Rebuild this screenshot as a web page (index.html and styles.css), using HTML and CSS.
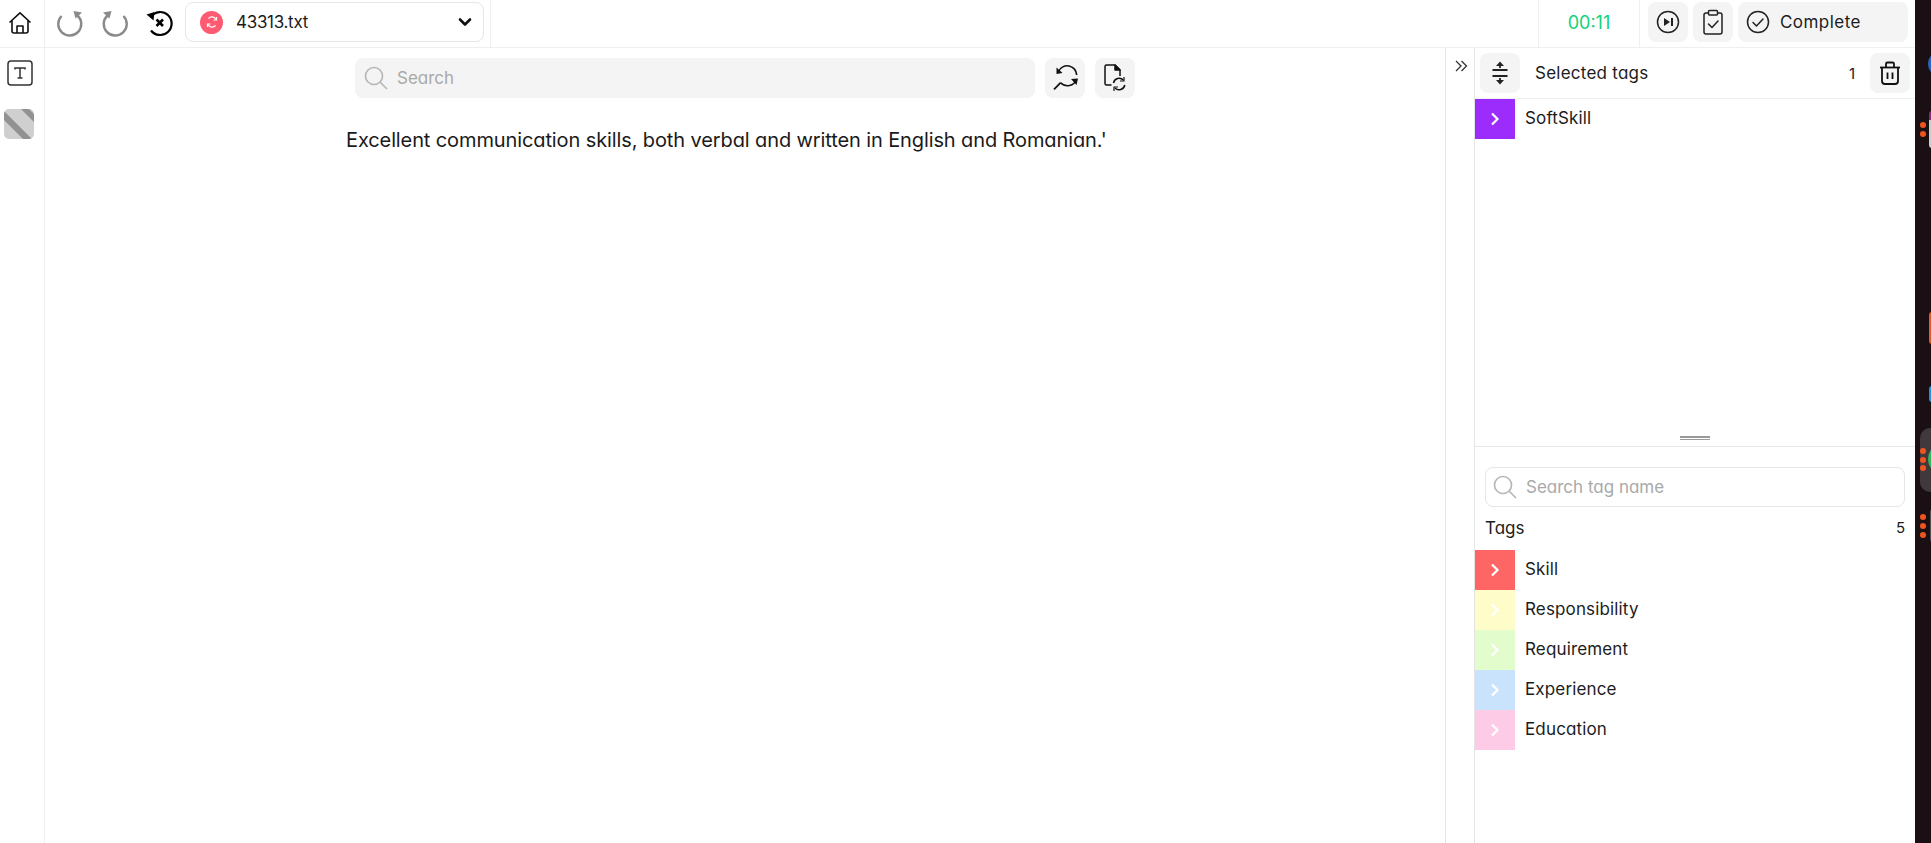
FILE: index.html
```html
<!DOCTYPE html>
<html lang="en">
<head>
    <meta charset="UTF-8" />
    <title>43313.txt</title>
    <link rel="stylesheet" href="styles.css">
</head>
<body>
    <div class="app">
        <header class="topbar">
            <div class="home-cell">
                <svg width="24" height="24" viewBox="0 0 24 24" fill="none" stroke="#111" stroke-width="1.600" stroke-linejoin="round"><path d="M1.500 11.500 12 1.800l10.500 9.700"/><path d="M4 9.500v10.500a2 2 0 0 0 2 2h12a2 2 0 0 0 2-2V9.500"/><path d="M9 22v-7h6v7"/></svg>
            </div>
            <div class="history">
                <svg width="28" height="28" viewBox="0 0 28 28" fill="none" stroke="#8a8a8a" stroke-width="2.400"><path d="M21.500 6.500A11.500 11.500 0 1 1 5.500 7"/><path d="M17.500 2 26 3.500 19.500 9.500z" fill="#8a8a8a" stroke="none"/></svg>
                <svg width="28" height="28" viewBox="0 0 28 28" fill="none" stroke="#8a8a8a" stroke-width="2.400"><path d="M6.500 6.500A11.500 11.500 0 1 0 22.500 7"/><path d="M10.500 2 2 3.500 8.500 9.500z" fill="#8a8a8a" stroke="none"/></svg>
                <svg width="28" height="28" viewBox="0 0 28 28" fill="none" stroke="#000" stroke-width="2.200"><path d="M5 7.500A11.500 11.500 0 1 1 5 21.500"/><path d="M0.500 5.500 8.500 3 7.500 11.500z" fill="#000" stroke="none"/><path d="M10.500 10.500l6.500 6.500M17 10.500l-6.500 6.500" stroke-width="2.600"/></svg>
            </div>
            <div class="file-cell">
                <div class="file-select">
                    <span class="file-badge">
                        <svg width="14" height="14" viewBox="0 0 14 14" fill="none" stroke="#fff" stroke-width="1.200"><path d="M11 4.500A4.500 4.500 0 0 0 3.500 3.500"/><path d="M3 9.500a4.500 4.500 0 0 0 7.500 1"/><path d="M11.500 2v3H8.500M2.500 12V9h3"/></svg>
                    </span>
                    <span class="file-name">43313.txt</span>
                    <svg class="caret" width="14" height="10" viewBox="0 0 14 10" fill="none" stroke="#111" stroke-width="2.600" stroke-linecap="round" stroke-linejoin="round"><path d="M2 2.500l5 5 5-5"/></svg>
                </div>
            </div>
            <div class="top-spacer"></div>
            <div class="timer">00:11</div>
            <div class="top-actions">
                <button class="icon-btn">
                    <svg width="24" height="24" viewBox="0 0 24 24" fill="none" stroke="#222" stroke-width="1.500"><circle cx="12" cy="12" r="10.500"/><path d="M8 8l6 4-6 4z" fill="#222" stroke="none"/><path d="M16 8v8" stroke-width="2"/></svg>
                </button>
                <button class="icon-btn">
                    <svg width="20" height="26" viewBox="0 0 20 26" fill="none" stroke="#222" stroke-width="1.500" stroke-linejoin="round"><path d="M5.500 4H3a2 2 0 0 0-2 2v17a2 2 0 0 0 2 2h14a2 2 0 0 0 2-2V6a2 2 0 0 0-2-2h-2.500"/><rect x="5.500" y="1.500" width="9" height="4.500" rx="1"/><path d="M5.500 15l3.500 3.500 6-6.500" stroke-linecap="round"/></svg>
                </button>
                <button class="complete-btn">
                    <svg width="24" height="24" viewBox="0 0 24 24" fill="none" stroke="#222" stroke-width="1.500"><circle cx="12" cy="12" r="10.500"/><path d="M7 12.500l3.500 3.500 6.500-7" stroke-linecap="round" stroke-linejoin="round"/></svg>
                    <span>Complete</span>
                </button>
            </div>
        </header>

        <div class="workspace">
            <aside class="rail">
                <svg width="26" height="26" viewBox="0 0 26 26" fill="none" stroke="#333" stroke-width="1.500"><rect x="1" y="1" width="24" height="24" rx="3"/><path d="M8 9.500V8h10v1.500M13 8v10M10.500 18h5"/></svg>
                <svg class="swatch" width="30" height="30" viewBox="0 0 30 30"><rect width="30" height="30" fill="#cfcfcf"/><path d="M0 2 28 30H19L0 11zM17 0h8L30 5V13z" fill="#929292"/></svg>
            </aside>

            <main class="center">
                <div class="doc-tools">
                    <div class="doc-search">
                        <svg width="24" height="24" viewBox="0 0 24 24" fill="none" stroke="#b8b8b8" stroke-width="1.700"><circle cx="10" cy="10" r="8.500"/><path d="M16 16l7 7"/></svg>
                        <span>Search</span>
                    </div>
                    <button class="icon-btn">
                        <svg width="28" height="28" viewBox="0 0 28 28" fill="none" stroke="#111" stroke-width="1.600"><path d="M7.500 7.500A9.500 9.500 0 0 1 25.700 11"/><path d="M25.500 15.500A9.500 9.500 0 0 1 9.700 18.700"/><path d="M5.500 3.500V10L11.500 9zM20 15l7-.500L25.500 21z" fill="#111" stroke="none"/><path d="M3 25.300 9.700 18.700" stroke-width="1.800"/></svg>
                    </button>
                    <button class="icon-btn">
                        <svg width="22" height="28" viewBox="0 0 22 28" fill="none" stroke="#111" stroke-width="1.500" stroke-linejoin="round"><path d="M7.500 21H2.500A1.500 1.500 0 0 1 1 19.500v-17A1.500 1.500 0 0 1 2.500 1H11l5 5v6"/><path d="M11 1v5h5z" fill="#111"/><path d="M9.500 19a5.800 5.800 0 0 1 9.800-3"/><path d="M20.800 21a5.800 5.800 0 0 1-9.800 3"/><path d="M20 13v4h-4M10 27v-4h4" stroke-width="1.200"/></svg>
                    </button>
                </div>
                <p class="doc-text">Excellent communication skills, both verbal and written in English and Romanian.'</p>
            </main>

            <div class="collapse-strip">
                <svg width="14" height="12" viewBox="0 0 14 12" fill="none" stroke="#333" stroke-width="1.300"><path d="M2 1l5 5-5 5M7.500 1l5 5-5 5"/></svg>
            </div>

            <section class="tags-panel">
                <div class="selected-head">
                    <button class="icon-btn">
                        <svg width="20" height="24" viewBox="0 0 20 24" fill="none" stroke="#222" stroke-width="1.800"><path d="M2.500 9h15M2.500 15h15M10 7V3M10 17v4"/><path d="M6 5 10 .500 14 5zM6 19 10 23.500 14 19z" fill="#222" stroke="none"/></svg>
                    </button>
                    <span class="selected-title">Selected tags</span>
                    <span class="selected-count">1</span>
                    <button class="icon-btn">
                        <svg width="22" height="24" viewBox="0 0 22 24" fill="none" stroke="#111" stroke-width="1.800" stroke-linejoin="round"><path d="M1 6.500h20"/><path d="M7 6V3a1.500 1.500 0 0 1 1.500-1.500h5A1.500 1.500 0 0 1 15 3v3"/><path d="M3 7v13a3 3 0 0 0 3 3h10a3 3 0 0 0 3-3V7"/><path d="M8.500 11.500v6.500M13.500 11.500v6.500"/></svg>
                    </button>
                </div>
                <div class="selected-list">
                    <div class="tag-row">
                        <span class="tag-chip chip-purple"><svg width="10" height="14" viewBox="0 0 10 14" fill="none" stroke="#fff" stroke-width="2.200"><path d="M2 1.500 7.500 7 2 12.500"/></svg></span>
                        <span>SoftSkill</span>
                    </div>
                </div>
                <div class="panel-handle"><span></span></div>
                <div class="tags-lower">
                    <div class="tag-search">
                        <svg width="24" height="24" viewBox="0 0 24 24" fill="none" stroke="#b8b8b8" stroke-width="1.700"><circle cx="10" cy="10" r="8.500"/><path d="M16 16l7 7"/></svg>
                        <span>Search tag name</span>
                    </div>
                    <div class="tags-head">
                        <span>Tags</span>
                        <span class="tags-count">5</span>
                    </div>
                </div>
                <div class="tag-list">
                    <div class="tag-row">
                        <span class="tag-chip chip-red"><svg width="10" height="14" viewBox="0 0 10 14" fill="none" stroke="#fff" stroke-width="2.200"><path d="M2 1.500 7.500 7 2 12.500"/></svg></span>
                        <span>Skill</span>
                    </div>
                    <div class="tag-row">
                        <span class="tag-chip chip-yellow"><svg width="10" height="14" viewBox="0 0 10 14" fill="none" stroke="#fff" stroke-width="2.200"><path d="M2 1.500 7.500 7 2 12.500"/></svg></span>
                        <span>Responsibility</span>
                    </div>
                    <div class="tag-row">
                        <span class="tag-chip chip-green"><svg width="10" height="14" viewBox="0 0 10 14" fill="none" stroke="#fff" stroke-width="2.200"><path d="M2 1.500 7.500 7 2 12.500"/></svg></span>
                        <span>Requirement</span>
                    </div>
                    <div class="tag-row">
                        <span class="tag-chip chip-blue"><svg width="10" height="14" viewBox="0 0 10 14" fill="none" stroke="#fff" stroke-width="2.200"><path d="M2 1.500 7.500 7 2 12.500"/></svg></span>
                        <span>Experience</span>
                    </div>
                    <div class="tag-row">
                        <span class="tag-chip chip-pink"><svg width="10" height="14" viewBox="0 0 10 14" fill="none" stroke="#fff" stroke-width="2.200"><path d="M2 1.500 7.500 7 2 12.500"/></svg></span>
                        <span>Education</span>
                    </div>
                </div>
            </section>
        </div>
    </div>

    <!-- sliver of the desktop behind the window -->
    <div class="desktop-strip">
        <span class="peek peek-blue"></span>
        <span class="peek peek-grey"></span>
        <span class="dot dot-a1"></span>
        <span class="dot dot-a2"></span>
        <span class="peek peek-orange"></span>
        <span class="peek peek-blue2"></span>
        <span class="peek peek-dock"></span>
        <span class="peek peek-green"></span>
        <span class="dot dot-b1"></span>
        <span class="dot dot-b2"></span>
        <span class="dot dot-b3"></span>
        <span class="peek peek-grey2"></span>
        <span class="dot dot-c1"></span>
        <span class="dot dot-c2"></span>
        <span class="dot dot-c3"></span>
    </div>
</body>
</html>
```

FILE: styles.css
```css
* {
    box-sizing: border-box;
}
html, body {
    height: 100%;
}
body {
    margin: 0;
    display: flex;
    height: 843px;
    overflow: hidden;
    font-family: Inter, "Noto Sans", sans-serif;
    font-feature-settings: "cv11";
    font-size: 17px;
    color: #1c1c1c;
    background-color: #fff;
}
svg {
    display: block;
    flex-shrink: 0;
}
button {
    font: inherit;
    font-feature-settings: inherit;
    color: inherit;
    border: none;
    cursor: pointer;
}
.app {
    width: 1915px;
    display: flex;
    flex-direction: column;
}

/* top bar */
.topbar {
    height: 48px;
    display: flex;
    align-items: stretch;
    border-bottom: 1px solid #efefef;
}
.home-cell {
    width: 45px;
    display: flex;
    align-items: center;
    justify-content: center;
    padding-right: 4px;
    padding-bottom: 2px;
    border-right: 1px solid #efefef;
}
.history {
    display: flex;
    align-items: center;
    gap: 17px;
    padding: 0 0 2px 11px;
}
.file-cell {
    width: 306px;
    margin-left: 11px;
    border-right: 1px solid #efefef;
    display: flex;
    align-items: center;
}
.file-select {
    width: 299px;
    height: 40px;
    margin-top: -3px;
    border: 1px solid #e6e6e6;
    border-radius: 8px;
    display: flex;
    align-items: center;
    padding: 0 10px 0 14px;
}
.file-badge {
    width: 23px;
    height: 23px;
    border-radius: 50%;
    background-color: #fe5a72;
    display: flex;
    align-items: center;
    justify-content: center;
}
.file-name {
    margin-left: 13px;
    flex: 1;
    letter-spacing: -.3px;
}
.caret {
    margin-right: 1px;
}
.top-spacer {
    flex: 1;
    border-right: 1px solid #efefef;
}
.timer {
    width: 101px;
    border-right: 1px solid #efefef;
    display: flex;
    align-items: center;
    justify-content: center;
    padding-bottom: 2px;
    font-size: 18px;
    color: #12d27a;
}
.top-actions {
    display: flex;
    align-items: center;
    gap: 5px;
    padding: 0 7px 3px 8px;
}
.icon-btn {
    width: 40px;
    height: 40px;
    padding: 0;
    border-radius: 8px;
    background-color: #f4f4f4;
    display: flex;
    align-items: center;
    justify-content: center;
}
.complete-btn {
    width: 170px;
    height: 40px;
    padding: 0 0 0 8px;
    border-radius: 8px;
    background-color: #f4f4f4;
    display: flex;
    align-items: center;
    gap: 10px;
    letter-spacing: .45px;
}

/* main area */
.workspace {
    flex: 1;
    display: flex;
    min-height: 0;
}
.rail {
    width: 45px;
    border-right: 1px solid #efefef;
    display: flex;
    flex-direction: column;
    align-items: center;
    padding: 12px 4px 0 0;
}
.swatch {
    margin-top: 23px;
    margin-left: -2px;
    border-radius: 5px;
}
.center {
    width: 1400px;
    padding-top: 10px;
}
.doc-tools {
    width: 780px;
    margin: 0 auto;
    display: flex;
    gap: 10px;
}
.doc-search {
    flex: 1;
    height: 40px;
    border-radius: 8px;
    background-color: #f4f4f4;
    display: flex;
    align-items: center;
    gap: 9px;
    padding: 0 0 1px 9px;
    color: #a9a9a9;
}
.doc-text {
    width: 800px;
    margin: 28px auto 0;
    padding-left: 1px;
    font-size: 20px;
    line-height: 28px;
    letter-spacing: -.11px;
    color: #1a1a1a;
}
.collapse-strip {
    width: 29px;
    border-left: 1px solid #e4e4e4;
    padding: 12px 0 0 8px;
}

/* tags panel */
.tags-panel {
    flex: 1;
    border-left: 1px solid #e4e4e4;
    display: flex;
    flex-direction: column;
}
.selected-head {
    height: 51px;
    border-bottom: 1px solid #efefef;
    display: flex;
    align-items: center;
    padding: 0 5px;
}
.selected-title {
    flex: 1;
    margin-left: 15px;
    letter-spacing: .25px;
}
.selected-count {
    margin-right: 15px;
    font-size: 15px;
}
.selected-list {
    height: 330px;
}
.panel-handle {
    height: 18px;
    border-bottom: 1px solid #e8e8e8;
    display: flex;
    justify-content: center;
}
.panel-handle span {
    width: 30px;
    height: 4px;
    margin-top: 7px;
    border-top: 2px solid #9a9a9a;
    border-bottom: 1px solid #9a9a9a;
}
.tags-lower {
    padding: 20px 10px 0;
}
.tag-search {
    height: 40px;
    border: 1px solid #e6e6e6;
    border-radius: 8px;
    display: flex;
    align-items: center;
    gap: 9px;
    padding: 0 0 1px 7px;
    color: #a9a9a9;
}
.tags-head {
    height: 43px;
    display: flex;
    align-items: center;
    justify-content: space-between;
    padding-bottom: 2px;
}
.tags-count {
    font-size: 15px;
}
.tag-row {
    height: 40px;
    display: flex;
    gap: 10px;
    line-height: 38px;
    letter-spacing: .15px;
}
.tag-chip {
    width: 40px;
    height: 40px;
    display: flex;
    align-items: center;
    justify-content: center;
}
.chip-purple { background-color: #9b2cfb; }
.chip-red { background-color: #fe6565; }
.chip-yellow { background-color: #fefdc9; }
.chip-green { background-color: #e2fdcb; }
.chip-blue { background-color: #c9e3fd; }
.chip-pink { background-color: #fdcbe5; }

/* desktop behind the window */
.desktop-strip {
    width: 16px;
    position: relative;
    background-color: #1a1014;
    overflow: hidden;
}
.peek {
    position: absolute;
}
.peek-blue {
    left: 13px;
    top: 53px;
    width: 18px;
    height: 22px;
    border-radius: 50%;
    background-color: #2a63c4;
}
.peek-grey {
    left: 14px;
    top: 111px;
    width: 6px;
    height: 37px;
    border-radius: 3px;
    background: linear-gradient(#8a2a70 0 9px, #cfcfcf 9px);
}
.peek-orange {
    left: 14px;
    top: 312px;
    width: 6px;
    height: 32px;
    border-radius: 3px;
    background-color: #e8582a;
}
.peek-blue2 {
    left: 14px;
    top: 386px;
    width: 6px;
    height: 16px;
    border-radius: 3px;
    background-color: #2a8fd8;
}
.peek-dock {
    left: 5px;
    top: 428px;
    width: 30px;
    height: 64px;
    border-radius: 10px;
    background-color: #40383c;
}
.peek-green {
    left: 13px;
    top: 446px;
    width: 20px;
    height: 26px;
    border-radius: 50%;
    background-color: #35b45c;
}
.peek-grey2 {
    left: 15px;
    top: 509px;
    width: 6px;
    height: 33px;
    border-radius: 3px;
    background-color: #55504f;
}
.dot {
    position: absolute;
    left: 5px;
    width: 6px;
    height: 6px;
    border-radius: 50%;
    background-color: #f0541e;
}
.dot-a1 { top: 122px; }
.dot-a2 { top: 131px; }
.dot-b1 { top: 448px; }
.dot-b2 { top: 457px; }
.dot-b3 { top: 465px; }
.dot-c1 { top: 514px; }
.dot-c2 { top: 523px; }
.dot-c3 { top: 532px; }
```
